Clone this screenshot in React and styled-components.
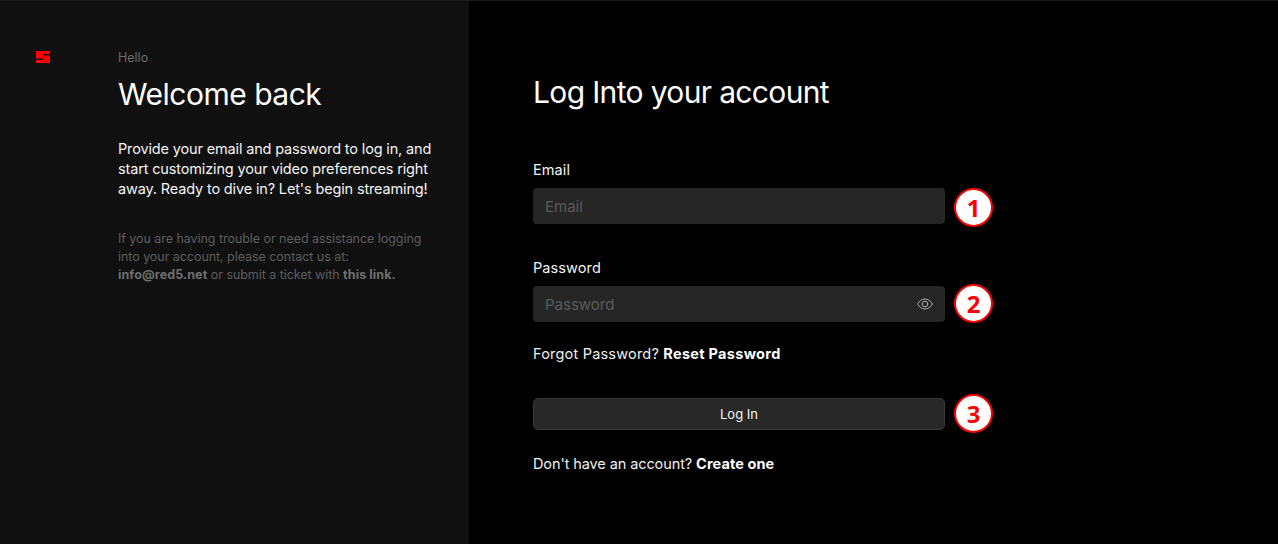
import React from 'react'
import styled, { createGlobalStyle } from 'styled-components'

const GlobalStyle = createGlobalStyle`
  html, body {
    margin: 0;
    background: #000;
  }
  * {
    box-sizing: border-box;
  }
`

const Page = styled.div`
  display: grid;
  grid-template-columns: 469px 1fr;
  height: 544px;
  overflow: hidden;
  font-family: Inter, "Liberation Sans", sans-serif;
  color: #fff;
  border-top: 1px solid #1a1a1a;
`

const Side = styled.aside`
  display: grid;
  grid-template-columns: 118px 1fr;
  align-content: start;
  background: #101010;
  padding: 49px 30px 0 0;
`

const Logo = styled.svg`
  display: block;
  width: 14px;
  height: 12px;
  margin: 1px 0 0 36px;
`

const Hello = styled.div`
  font-size: 12.5px;
  line-height: 16px;
  color: #6b6b6b;
`

const Welcome = styled.h1`
  margin: 8px 0 0;
  font-size: 30px;
  line-height: 40px;
  font-weight: 400;
  letter-spacing: -0.5px;
`

const Lead = styled.p`
  margin: 25px 0 0;
  font-size: 14.5px;
  line-height: 20px;
  letter-spacing: -0.15px;
  color: #f4f4f4;
`

const Help = styled.p`
  margin: 31px 0 0;
  font-size: 12.5px;
  line-height: 18px;
  letter-spacing: -0.05px;
  color: #5d5d5d;

  b {
    font-weight: 700;
    letter-spacing: 0.1px;
    color: #6e6e6e;
  }
`

const Main = styled.main`
  padding: 71px 0 0 64px;
`

const Form = styled.form`
  width: 412px;
`

const Title = styled.h2`
  margin: 0 0 49px;
  font-size: 30px;
  line-height: 40px;
  font-weight: 400;
  letter-spacing: -0.65px;
`

const Field = styled.div`
  position: relative;

  & + & {
    margin-top: 35px;
  }
`

const Label = styled.label`
  display: block;
  margin-bottom: 9px;
  font-size: 14.5px;
  line-height: 18px;
  letter-spacing: 0.1px;
  color: #f4f4f4;
`

const Input = styled.input`
  display: block;
  width: 100%;
  height: 36px;
  padding: 0 12px;
  border: 0;
  border-radius: 4px;
  background: #262626;
  color: #fff;
  font-family: inherit;
  font-size: 15px;

  &::placeholder {
    color: #5a5a5a;
    opacity: 1;
  }
`

const Eye = styled.svg`
  position: absolute;
  right: 12px;
  bottom: 10px;
  width: 16px;
  height: 16px;
  fill: none;
  stroke: #aaa;
  stroke-width: 1;
`

const Marker = styled.span`
  position: absolute;
  right: -48px;
  bottom: ${({ $bottom }) => $bottom}px;
  display: flex;
  align-items: center;
  justify-content: center;
  width: 39px;
  height: 39px;
  border: 2px solid #f00;
  border-radius: 50%;
  background: #fff;
  color: #f00;
  font-family: "Open Sans", sans-serif;
  font-size: 24px;
  font-weight: 700;
`

const Note = styled.p`
  margin: ${({ $top }) => $top}px 0 0;
  font-size: 14.5px;
  line-height: 18px;
  letter-spacing: ${({ $spacing }) => $spacing}px;
  color: #f0f0f0;

  b {
    font-weight: 700;
    letter-spacing: ${({ $boldSpacing }) => $boldSpacing}px;
    color: #fff;
  }
`

const Submit = styled.div`
  position: relative;
  margin-top: 35px;
`

const Button = styled.button`
  display: block;
  width: 100%;
  height: 32px;
  border: 1px solid #3a3a3a;
  border-radius: 5px;
  background: #282828;
  color: #f4f4f4;
  font-family: inherit;
  font-size: 13px;
`

export default function App() {
  return (
    <Page>
      <GlobalStyle />
      <Side>
        <Logo viewBox="0 0 14 12">
          <path fill="#f00" d="M0 0H14V3H7V4.500H14V12H0V9H7V7.500H0Z" />
        </Logo>
        <div>
          <Hello>Hello</Hello>
          <Welcome>Welcome back</Welcome>
          <Lead>
            Provide your email and password to log in, and start customizing your video
            preferences right away. Ready to dive in? Let's begin streaming!
          </Lead>
          <Help>
            If you are having trouble or need assistance logging into your account, please
            contact us at: <b>info@red5.net</b> or submit a ticket with <b>this link.</b>
          </Help>
        </div>
      </Side>
      <Main>
        <Form>
          <Title>Log Into your account</Title>
          <Field>
            <Label>Email</Label>
            <Input placeholder="Email" />
            <Marker $bottom={-3}>1</Marker>
          </Field>
          <Field>
            <Label>Password</Label>
            <Input placeholder="Password" />
            <Eye viewBox="0 0 16 16">
              <path d="M.6 8C2.500 4.800 5 3 8 3S13.500 4.800 15.400 8C13.500 11.200 11 13 8 13S2.500 11.200 .6 8z" />
              <circle cx="8" cy="8" r="2.800" />
            </Eye>
            <Marker $bottom={-1}>2</Marker>
          </Field>
          <Note $top={23} $spacing={0.2} $boldSpacing={0.3}>
            Forgot Password? <b>Reset Password</b>
          </Note>
          <Submit>
            <Button type="button">Log In</Button>
            <Marker $bottom={-3}>3</Marker>
          </Submit>
          <Note $top={25} $spacing={-0.1} $boldSpacing={0.1}>
            Don't have an account? <b>Create one</b>
          </Note>
        </Form>
      </Main>
    </Page>
  )
}
